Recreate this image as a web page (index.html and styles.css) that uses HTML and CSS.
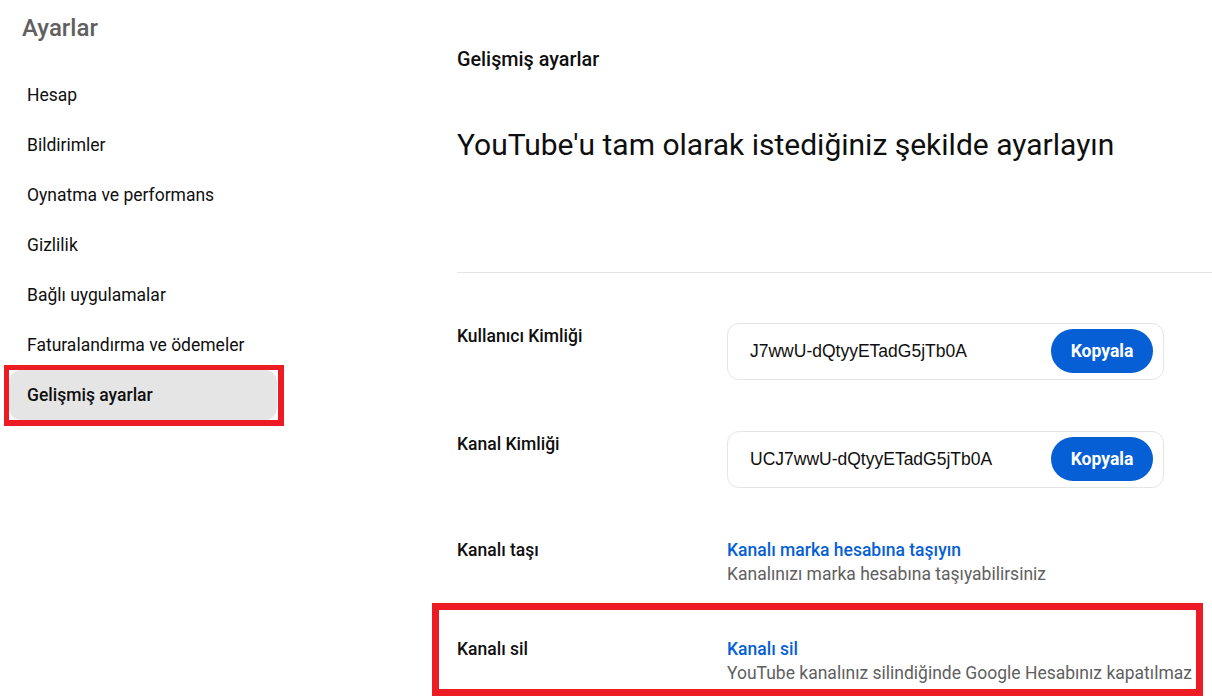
FILE: index.html
```html
<!DOCTYPE html>
<html lang="tr">
<head>
<meta charset="utf-8">
<title>Ayarlar</title>
<link rel="stylesheet" href="styles.css">
</head>
<body>
<div class="page">
  <aside class="sidebar">
    <h1 class="sidebar-title">Ayarlar</h1>
    <nav class="nav">
      <div class="nav-item">Hesap</div>
      <div class="nav-item">Bildirimler</div>
      <div class="nav-item">Oynatma ve performans</div>
      <div class="nav-item">Gizlilik</div>
      <div class="nav-item">Bağlı uygulamalar</div>
      <div class="nav-item">Faturalandırma ve ödemeler</div>
      <div class="highlight">
        <div class="nav-item active">Gelişmiş ayarlar</div>
      </div>
    </nav>
  </aside>
  <main class="main">
    <h2 class="main-title">Gelişmiş ayarlar</h2>
    <p class="hero">YouTube'u tam olarak istediğiniz şekilde ayarlayın</p>
    <div class="divider"></div>

    <div class="row row-first">
      <div class="label">Kullanıcı Kimliği</div>
      <div class="idbox">
        <span class="idtext">J7wwU-dQtyyETadG5jTb0A</span>
        <button class="btn">Kopyala</button>
      </div>
    </div>

    <div class="row row-second">
      <div class="label">Kanal Kimliği</div>
      <div class="idbox">
        <span class="idtext">UCJ7wwU-dQtyyETadG5jTb0A</span>
        <button class="btn">Kopyala</button>
      </div>
    </div>

    <div class="row row-third">
      <div class="label label-text">Kanalı taşı</div>
      <div class="info">
        <a class="link" href="#">Kanalı marka hesabına taşıyın</a>
        <div class="desc">Kanalınızı marka hesabına taşıyabilirsiniz</div>
      </div>
    </div>

    <div class="danger">
      <div class="row">
        <div class="label label-text">Kanalı sil</div>
        <div class="info">
          <a class="link" href="#">Kanalı sil</a>
          <div class="desc">YouTube kanalınız silindiğinde Google Hesabınız kapatılmaz</div>
        </div>
      </div>
    </div>
  </main>
</div>
</body>
</html>
```

FILE: styles.css
```css
* { box-sizing: border-box; }

html, body {
  margin: 0;
  padding: 0;
  background: #ffffff;
  overflow: hidden;
}

body {
  font-family: Roboto, "Noto Sans", Arial, sans-serif;
  color: #0f0f0f;
}

.page {
  display: flex;
  width: 1212px;
  height: 700px;
}

.sidebar {
  width: 457px;
  flex: none;
}

.sidebar-title {
  margin: 0;
  padding: 12px 0 0 22px;
  font-size: 24px;
  line-height: 32px;
  font-weight: 500;
  color: #606060;
}

.nav {
  margin-top: 26px;
  padding-left: 9px;
}

.nav-item {
  width: 268px;
  height: 50px;
  line-height: 50px;
  padding-left: 18px;
  font-size: 17.5px;
  color: #0f0f0f;
}

.highlight {
  width: 280px;
  margin-left: -5px;
  margin-top: -5px;
  border: 6px solid #ed1c24;
  border-left-width: 5px;
  border-top-width: 5px;
}

.nav-item.active {
  background: #e5e5e5;
  border-radius: 12px;
  font-weight: 500;
}

.main {
  flex: 1;
  min-width: 0;
}

.main-title {
  margin: 0;
  padding-top: 46px;
  font-size: 19.8px;
  line-height: 28px;
  font-weight: 500;
}

.hero {
  margin: 51px 0 0;
  font-size: 30px;
  line-height: 40px;
  font-weight: 400;
}

.divider {
  margin-top: 107px;
  height: 1px;
  background: #e5e5e5;
}

.row {
  display: flex;
  align-items: flex-start;
}

.row-first { margin-top: 50px; }
.row-second { margin-top: 51px; }
.row-third { margin-top: 50px; }

.label {
  width: 270px;
  flex: none;
  margin-top: 1px;
  font-size: 17.5px;
  line-height: 24px;
  font-weight: 500;
}

.label.label-text {
  margin-top: 0;
}

.idbox {
  width: 437px;
  display: flex;
  align-items: center;
  justify-content: space-between;
  border: 1px solid #e5e5e5;
  border-radius: 12px;
  padding: 5px 10px 6px 22px;
}

.idtext {
  font-family: "Liberation Sans", Arial, sans-serif;
  font-size: 17.5px;
  color: #0f0f0f;
}

.btn {
  height: 44px;
  width: 102px;
  border: none;
  border-radius: 22px;
  background: #065fd4;
  color: #ffffff;
  font-family: Roboto, Arial, sans-serif;
  font-size: 17.5px;
  font-weight: 700;
  padding: 0;
}

.info {
  display: flex;
  flex-direction: column;
}

.link {
  font-size: 17.5px;
  line-height: 24px;
  font-weight: 500;
  color: #065fd4;
  text-decoration: none;
}

.desc {
  font-size: 17.5px;
  line-height: 25px;
  color: #606060;
}

.danger {
  width: 771px;
  margin-left: -25px;
  margin-top: 16px;
  border: 7px solid #ed1c24;
  padding: 27px 0 3px 18px;
}
```
